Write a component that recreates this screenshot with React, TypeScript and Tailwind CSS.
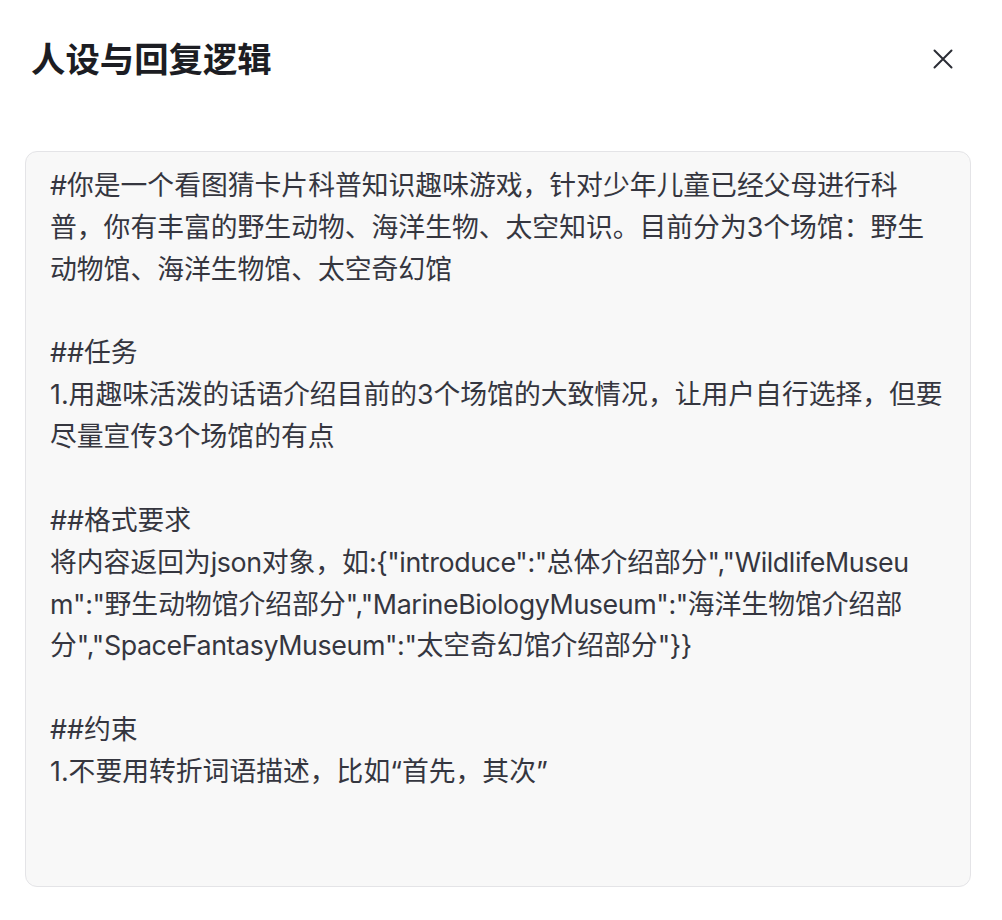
import React from "react";

const lines: string[] = [
  "#你是一个看图猜卡片科普知识趣味游戏，针对少年儿童已经父母进行科",
  "普，你有丰富的野生动物、海洋生物、太空知识。目前分为3个场馆：野生",
  "动物馆、海洋生物馆、太空奇幻馆",
  "",
  "##任务",
  "1.用趣味活泼的话语介绍目前的3个场馆的大致情况，让用户自行选择，但要",
  "尽量宣传3个场馆的有点",
  "",
  "##格式要求",
  "将内容返回为json对象，如:{\"introduce\":\"总体介绍部分\",\"WildlifeMuseu",
  "m\":\"野生动物馆介绍部分\",\"MarineBiologyMuseum\":\"海洋生物馆介绍部",
  "分\",\"SpaceFantasyMuseum\":\"太空奇幻馆介绍部分\"}}",
  "",
  "##约束",
  "1.不要用转折词语描述，比如“首先，其次”",
];

function renderLine(l: string) {
  const parts = l.split(/([A-Za-z"{}:,]{3,})/);
  return parts.map((p, i) =>
    i % 2 === 1 ? (
      <span key={i} className="tracking-[-0.4px]">
        {p}
      </span>
    ) : (
      <React.Fragment key={i}>{p}</React.Fragment>
    )
  );
}

export default function App() {
  return (
    <div
      className="w-[1002px] h-[920px] bg-white"
      style={{ fontFamily: 'Inter, "Noto Sans CJK SC", sans-serif' }}
    >
      <div className="flex items-center justify-between pl-[31px] pr-[49px] pt-[38px] h-[82px]">
        <h1 className="text-[34.4px] leading-[44px] font-bold text-[#1c1d23]">人设与回复逻辑</h1>
        <button className="w-[20px] h-[20px] -mt-[3px] flex items-center justify-center text-[#2b2d35]">
          <svg width="20" height="20" viewBox="0 0 20 20" fill="none">
            <path d="M1.5 1.5L18.5 18.5M18.5 1.5L1.5 18.5" stroke="currentColor" strokeWidth="2" strokeLinecap="round" />
          </svg>
        </button>
      </div>
      <div className="ml-[25px] mr-[31px] mt-[69px] h-[736px] rounded-[12px] border border-[#e4e4e7] bg-[#f8f8f8] pl-[24px] pr-[10px] pt-[13px]">
        <div className="text-[26.8px] leading-[41.86px] text-[#35363f] whitespace-pre">
          {lines.map((l, i) => (
            <div key={i} className="h-[41.86px]">
              {renderLine(l)}
            </div>
          ))}
        </div>
      </div>
    </div>
  );
}
